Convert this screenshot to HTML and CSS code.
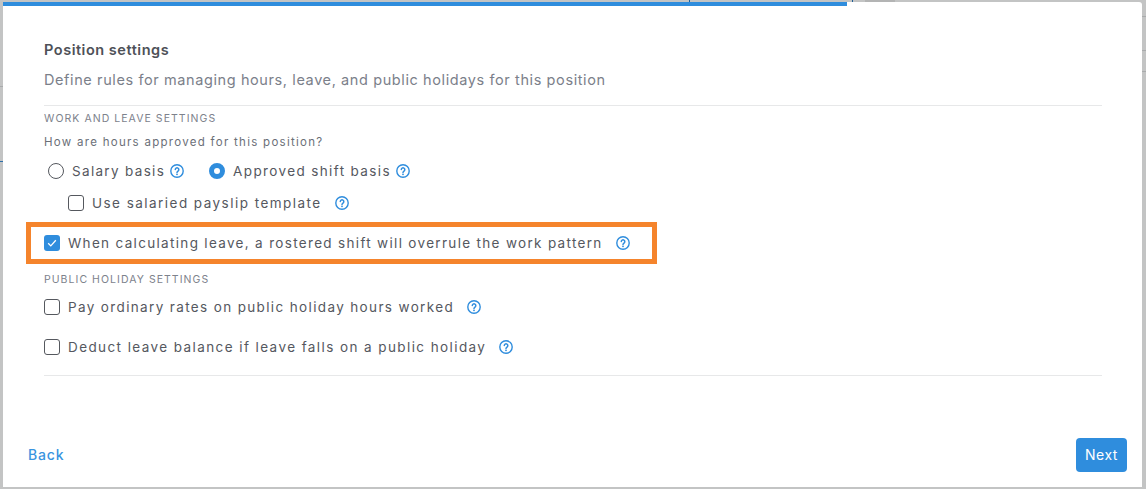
FILE: index.html
```html
<!DOCTYPE html>
<html lang="en">
<head>
<meta charset="utf-8">
<title>Position settings</title>
<link rel="stylesheet" href="styles.css">
</head>
<body>
<svg width="0" height="0" class="defs" aria-hidden="true">
  <symbol id="help" viewBox="0 0 14 14">
    <circle cx="7" cy="7" r="6.2" fill="none" stroke="currentColor" stroke-width="1.4"/>
    <path d="M5.3 5.6a1.75 1.75 0 1 1 2.7 1.45c-.65.42-1 .72-1 1.35" fill="none" stroke="currentColor" stroke-width="1.5" stroke-linecap="round"/>
    <circle cx="7" cy="10.3" r=".9" fill="currentColor"/>
  </symbol>
</svg>
<div class="backdrop" aria-hidden="true">
  <span class="bg-line bg-l1"></span>
  <span class="bg-line bg-l2"></span>
  <span class="bg-line bg-r1"></span>
  <span class="bg-line bg-r2"></span>
  <span class="bg-line bg-r3"></span>
  <span class="bg-tab"></span>
  <span class="bg-btn"></span>
</div>
<main class="modal">
  <div class="progress"></div>
  <div class="content">
    <h1 class="title">Position settings</h1>
    <p class="subtitle">Define rules for managing hours, leave, and public holidays for this position</p>
    <hr class="rule rule-top">
    <div class="label label-work">WORK AND LEAVE SETTINGS</div>
    <div class="question">How are hours approved for this position?</div>
    <div class="row radios">
      <span class="radio"></span>
      <span class="text">Salary basis</span>
      <svg class="help h-near"><use href="#help"/></svg>
      <span class="radio radio-on"></span>
      <span class="text t-shift">Approved shift basis</span>
      <svg class="help h-near"><use href="#help"/></svg>
    </div>
    <div class="row indent">
      <span class="check"></span>
      <span class="text t-payslip">Use salaried payslip template</span>
      <svg class="help h-wide"><use href="#help"/></svg>
    </div>
    <div class="row highlight">
      <span class="check check-on">
        <svg viewBox="0 0 16 16" width="16" height="16"><path d="M4.2 8.3l2.6 2.6 5-5.6" fill="none" stroke="#fff" stroke-width="1.3"/></svg>
      </span>
      <span class="text">When calculating leave, a rostered shift will overrule the work pattern</span>
      <svg class="help h-wide"><use href="#help"/></svg>
    </div>
    <div class="label label-public">PUBLIC HOLIDAY SETTINGS</div>
    <div class="row row-pay">
      <span class="check"></span>
      <span class="text t-pay">Pay ordinary rates on public holiday hours worked</span>
      <svg class="help h-wide"><use href="#help"/></svg>
    </div>
    <div class="row row-deduct">
      <span class="check"></span>
      <span class="text t-deduct">Deduct leave balance if leave falls on a public holiday</span>
      <svg class="help h-wide"><use href="#help"/></svg>
    </div>
    <hr class="rule rule-bottom">
  </div>
  <footer class="footer">
    <a class="back">Back</a>
    <button class="next" type="button">Next</button>
  </footer>
</main>
</body>
</html>
```
FILE: styles.css
```css
* { box-sizing: border-box; }
html, body { margin: 0; height: 489px; overflow: hidden; }
body {
  background: #c3c4c4;
  font-family: "Inter", "Noto Sans", sans-serif;
  color: #555860;
  padding: 2px 4px 2px 3px;
  position: relative;
}
.defs { position: absolute; }

.backdrop { position: absolute; inset: 0; overflow: hidden; }
.bg-line { position: absolute; height: 1px; background: #a9abac; }
.bg-l1 { left: 0; width: 3px; top: 86px; }
.bg-l2 { left: 0; width: 3px; top: 161px; background: #2f6fa8; }
.bg-r1 { left: 1142px; width: 4px; top: 16px; }
.bg-r2 { left: 1142px; width: 4px; top: 50px; }
.bg-r3 { left: 1142px; width: 4px; top: 71px; }
.bg-tab { position: absolute; left: 865px; top: 0; width: 30px; height: 2px; background: #b3b4b4; }
.bg-btn {
  position: absolute; left: 689px; top: 0; width: 164px; height: 2px;
  border-left: 1px solid #1f5f96; border-right: 1px solid #1f5f96;
}

.modal {
  position: relative;
  height: 485px;
  background: #fff;
  border-top-right-radius: 3px;
  display: flex;
  flex-direction: column;
}
.progress { width: 844px; height: 4px; background: #2f8ddd; flex: none; }
.content { padding: 0 40px 0 41px; flex: 1; }

.title {
  margin: 34px 0 0;
  font-size: 14.5px;
  line-height: 20px;
  font-weight: 600;
  color: #4e5158;
  letter-spacing: .53px;
}
.subtitle {
  margin: 10px 0 0;
  font-size: 14.5px;
  line-height: 20px;
  color: #7b808a;
  letter-spacing: .6px;
}
.rule { margin: 0; border: 0; height: 1px; background: #e7e8e9; }
.rule-top { margin-top: 15px; }
.rule-bottom { margin-top: 17px; }

.label {
  font-size: 10.5px;
  line-height: 14px;
  color: #7d828c;
  letter-spacing: 1.05px;
}
.label-work { margin-top: 6px; }
.label-public { margin-top: 9px; }
.question {
  margin-top: 8px;
  font-size: 11.5px;
  line-height: 16px;
  color: #6b6f78;
  letter-spacing: 1.28px;
}

.row { display: flex; align-items: center; height: 22px; }
.radios { margin-top: 10px; padding-left: 4px; }
.indent { margin-top: 10px; padding-left: 24px; }
.highlight {
  margin: 8px 0 0 -18px;
  width: 631px;
  height: 42px;
  border: 5px solid #f5842c;
  padding-left: 13px;
}
.row-pay { margin-top: 9px; }
.row-deduct { margin-top: 18px; }

.text { margin-left: 8px; font-size: 13.5px; line-height: 20px; letter-spacing: 1.32px; white-space: nowrap; color: #555860; }
.t-shift { letter-spacing: 1.37px; }
.t-payslip { letter-spacing: 1.46px; }
.t-pay { letter-spacing: 1.36px; }
.t-deduct { letter-spacing: 1.41px; }

.radio {
  width: 16px; height: 16px; border-radius: 50%;
  border: 1px solid #55585e; background: #fff; flex: none;
}
.radio-on { border: 5px solid #2f8ddd; margin-left: 25px; }
.check {
  width: 16px; height: 16px; border-radius: 3px;
  border: 1px solid #55585e; background: #fff; flex: none;
  display: block;
}
.check-on { border: 0; background: #2f8ddd; }
.check-on svg { display: block; }

.help { width: 14px; height: 14px; color: #2f8ddd; flex: none; }
.h-near { margin-left: 5px; }
.h-wide { margin-left: 13px; }

.footer {
  display: flex;
  justify-content: space-between;
  align-items: center;
  padding: 0 15px 15px 25px;
}
.back {
  font-size: 14px;
  line-height: 20px;
  font-weight: 500;
  color: #3a94e0;
  letter-spacing: .85px;
}
.next {
  width: 51px; height: 34px;
  border: 0; border-radius: 4px;
  background: #2f8ddd;
  color: #fff;
  font-family: "Inter", sans-serif;
  font-size: 14px;
  letter-spacing: .5px;
  padding: 0 0 1px;
}
```
